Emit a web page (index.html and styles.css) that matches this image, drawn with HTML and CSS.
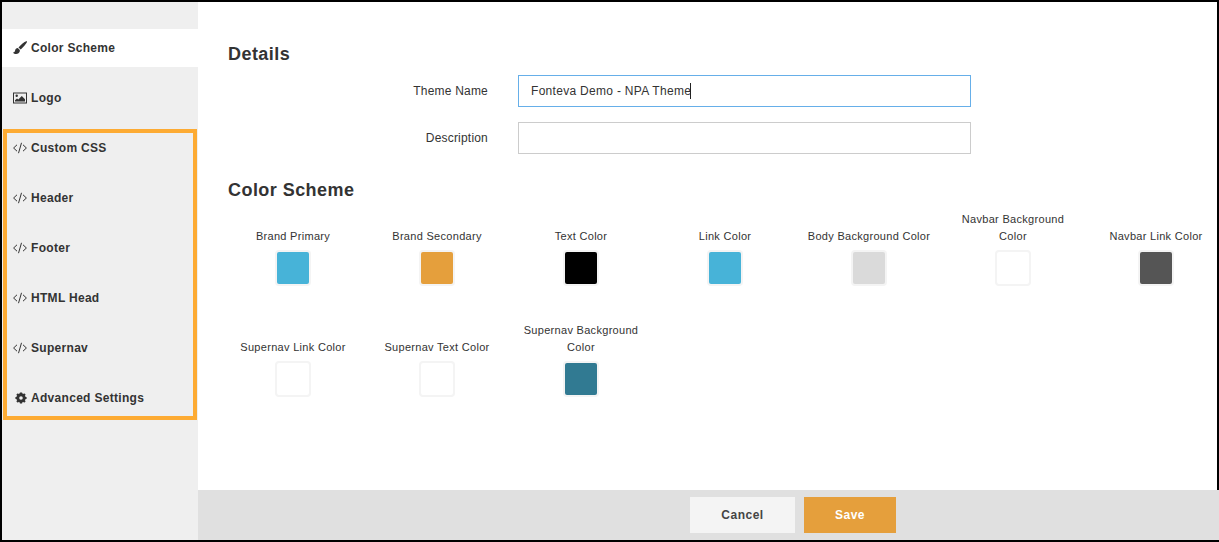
FILE: index.html
```html
<html>
    <head>
        <link rel="stylesheet" href="styles.css">
    </head>
    <body>
        <div class="frame">
            <div class="sidebar">
                <a class="nav-item active">
                    <svg class="icon" viewBox="0 0 14 14"><path d="M13.200 0.200c-1.800 0.700-5.400 3.400-7.700 6.300l2.200 2.100c2.700-2.400 5.600-6 6.300-7.600 0.200-0.500-0.300-1-0.800-0.800z"/><path d="M4.800 7.100c-1.500 0.100-2.500 1.100-2.700 2.500-0.200 1.300-0.900 1.900-2.100 2.100 1.100 1.500 3.900 1.900 5.500 0.600 1.100-0.900 1.500-2 1.300-3.300z"/></svg>
                    Color Scheme
                </a>
                <a class="nav-item">
                    <svg class="icon" viewBox="0 0 14 14"><path fill-rule="evenodd" d="M0 1.500h14v11h-14zM1 2.500v9h12v-9z"/><circle cx="3.700" cy="4.700" r="1.200"/><path d="M2 10.500v-1.300l2-1.800 1.300 1.200 3.500-3.600 3.200 3.200v2.300z"/></svg>
                    Logo
                </a>
                <div class="nav-group">
                    <a class="nav-item">
                        <svg class="icon code" viewBox="0 0 14 14"><path d="M4 3.800l-3.400 3.200 3.400 3.200M10 3.800l3.400 3.200-3.400 3.200M8.500 1.800l-3 10.400"/></svg>
                        Custom CSS
                    </a>
                    <a class="nav-item">
                        <svg class="icon code" viewBox="0 0 14 14"><path d="M4 3.800l-3.400 3.200 3.400 3.200M10 3.800l3.400 3.200-3.400 3.200M8.500 1.800l-3 10.400"/></svg>
                        Header
                    </a>
                    <a class="nav-item">
                        <svg class="icon code" viewBox="0 0 14 14"><path d="M4 3.800l-3.400 3.200 3.400 3.200M10 3.800l3.400 3.200-3.400 3.200M8.500 1.800l-3 10.400"/></svg>
                        Footer
                    </a>
                    <a class="nav-item">
                        <svg class="icon code" viewBox="0 0 14 14"><path d="M4 3.800l-3.400 3.200 3.400 3.200M10 3.800l3.400 3.200-3.400 3.200M8.500 1.800l-3 10.400"/></svg>
                        HTML Head
                    </a>
                    <a class="nav-item">
                        <svg class="icon code" viewBox="0 0 14 14"><path d="M4 3.800l-3.400 3.200 3.400 3.200M10 3.800l3.400 3.200-3.400 3.200M8.500 1.800l-3 10.400"/></svg>
                        Supernav
                    </a>
                    <a class="nav-item">
                        <svg class="icon cog" viewBox="0 0 14 14"><circle class="cog-ring" cx="7" cy="7" r="3.800"/><path class="cog-teeth" d="M7 0.500v3M7 10.500v3M0.500 7h3M10.500 7h3M2.400 2.400l2 2M9.600 9.600l2 2M2.400 11.600l2-2M9.600 4.400l2-2"/></svg>
                        Advanced Settings
                    </a>
                </div>
            </div>
            <div class="content">
                <div class="panel">
                    <h2>Details</h2>
                    <div class="form-row">
                        <label>Theme Name</label>
                        <div class="field">
                            <input class="focused" type="text" value="Fonteva Demo - NPA Theme" />
                            <span class="caret"></span>
                        </div>
                    </div>
                    <div class="form-row">
                        <label>Description</label>
                        <div class="field">
                            <input type="text" />
                        </div>
                    </div>
                    <h2 class="scheme-title">Color Scheme</h2>
                    <div class="swatches">
                        <div class="swatch"><span>Brand Primary</span><i class="chip brand-primary"></i></div>
                        <div class="swatch"><span>Brand Secondary</span><i class="chip brand-secondary"></i></div>
                        <div class="swatch"><span>Text Color</span><i class="chip text-color"></i></div>
                        <div class="swatch"><span>Link Color</span><i class="chip brand-primary"></i></div>
                        <div class="swatch"><span>Body Background Color</span><i class="chip body-bg"></i></div>
                        <div class="swatch"><span>Navbar Background Color</span><i class="chip"></i></div>
                        <div class="swatch"><span>Navbar Link Color</span><i class="chip navbar-link"></i></div>
                        <div class="swatch"><span>Supernav Link Color</span><i class="chip"></i></div>
                        <div class="swatch"><span>Supernav Text Color</span><i class="chip"></i></div>
                        <div class="swatch"><span>Supernav Background Color</span><i class="chip supernav-bg"></i></div>
                    </div>
                </div>
                <div class="footer">
                    <button class="cancel">Cancel</button>
                    <button class="save">Save</button>
                </div>
            </div>
        </div>
    </body>
</html>
```

FILE: styles.css
```css
* {
    box-sizing: border-box;
}
body {
    margin: 0;
    font-family: "Liberation Sans", Arial, sans-serif;
    color: #333;
}
.frame {
    display: flex;
    width: 1219px;
    height: 542px;
    border: 2px solid #000;
    background-color: #fff;
}
.sidebar {
    width: 196px;
    flex-shrink: 0;
    padding-top: 27px;
    background-color: #efefef;
}
.nav-item {
    display: flex;
    align-items: center;
    height: 38px;
    margin-bottom: 12px;
    padding-left: 11px;
    font-size: 12px;
    font-weight: bold;
    letter-spacing: 0.3px;
    white-space: nowrap;
}
.nav-item.active {
    background-color: #fff;
}
.icon {
    width: 14px;
    height: 14px;
    margin-right: 4px;
    fill: #333;
}
.icon.code {
    fill: none;
    stroke: #333;
    stroke-width: 1;
}
.icon.cog {
    width: 12px;
    height: 12px;
    margin-left: 2px;
    margin-right: 4px;
}
.cog-ring {
    fill: none;
    stroke: #333;
    stroke-width: 3.4;
}
.cog-teeth {
    fill: none;
    stroke: #333;
    stroke-width: 2.6;
}
.nav-group {
    height: 291px;
    margin: 0 1px;
    border: 4px solid #fdab33;
}
.nav-group .nav-item {
    padding-left: 6px;
}
.nav-group .nav-item:first-child {
    margin-top: -4px;
}
.content {
    display: flex;
    flex-direction: column;
    flex: 1;
}
.panel {
    flex: 1;
    padding: 42px 0 0 30px;
}
h2 {
    margin: 0;
    font-size: 18px;
    line-height: 20px;
    letter-spacing: 0.45px;
}
.form-row {
    display: flex;
    align-items: center;
    margin-bottom: 15px;
}
h2 + .form-row {
    margin-top: 11px;
}
label {
    width: 260px;
    margin-right: 30px;
    text-align: right;
    font-size: 12px;
    letter-spacing: 0.2px;
}
.field {
    position: relative;
}
input[type="text"] {
    display: block;
    width: 453px;
    height: 32px;
    padding: 0 12px;
    border: 1px solid #ccc;
    outline: none;
    font-family: inherit;
    font-size: 12px;
    letter-spacing: 0.3px;
    color: #333;
}
input.focused {
    border-color: #66afe9;
}
.caret {
    position: absolute;
    left: 172px;
    top: 8px;
    width: 1px;
    height: 16px;
    background-color: #222;
}
.scheme-title {
    margin-top: 26px;
}
.swatches {
    display: grid;
    grid-template-columns: repeat(6, 144px) 142px;
    grid-auto-rows: 111px;
    margin: 10px 0 0 -7px;
}
.swatch {
    display: flex;
    flex-direction: column;
    align-items: center;
    justify-content: flex-end;
    align-self: start;
    height: 76px;
    padding: 0 8px;
    text-align: center;
    font-size: 11px;
    line-height: 17px;
    letter-spacing: 0.3px;
}
.chip {
    display: block;
    flex-shrink: 0;
    width: 36px;
    height: 36px;
    margin-top: 5px;
    border: 2px solid #f4f4f4;
    border-radius: 4px;
    background-color: #fff;
}
.brand-primary {
    background-color: #47b3d8;
}
.brand-secondary {
    background-color: #e59f3c;
}
.text-color {
    background-color: #000;
}
.body-bg {
    background-color: #dadada;
}
.navbar-link {
    background-color: #555;
}
.supernav-bg {
    background-color: #317a92;
}
.footer {
    display: flex;
    gap: 9px;
    height: 50px;
    padding: 7px 0 0 492px;
    background-color: #e0e0e0;
}
button {
    height: 36px;
    border: none;
    font-family: inherit;
    font-size: 12px;
    font-weight: bold;
    letter-spacing: 0.5px;
}
.cancel {
    width: 105px;
    background-color: #f4f4f4;
    color: #444;
}
.save {
    width: 92px;
    background-color: #e59f3c;
    color: #fff;
}
```
